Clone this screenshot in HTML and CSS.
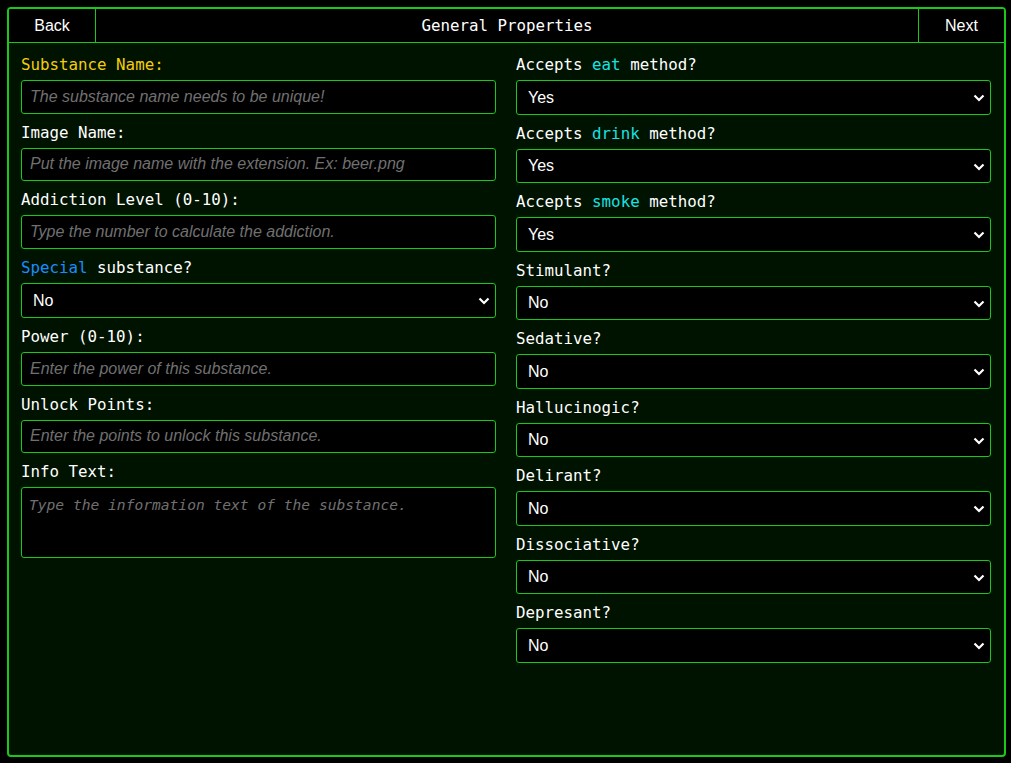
FILE: index.html
```html
<!DOCTYPE html>
<html>
<head>
<meta charset="utf-8">
<link rel="stylesheet" href="styles.css">
</head>
<body>
<div class="panel">
  <div class="topbar">
    <button class="nav nav-back">Back</button>
    <div class="title">General Properties</div>
    <button class="nav nav-next">Next</button>
  </div>
  <div class="content">
    <div class="col">
      <div class="field">
        <label class="lbl"><span class="yellow">Substance Name:</span></label>
        <input class="inp" type="text" placeholder="The substance name needs to be unique!">
      </div>
      <div class="field">
        <label class="lbl">Image Name:</label>
        <input class="inp" type="text" placeholder="Put the image name with the extension. Ex: beer.png">
      </div>
      <div class="field">
        <label class="lbl">Addiction Level (0-10):</label>
        <input class="inp" type="text" placeholder="Type the number to calculate the addiction.">
      </div>
      <div class="field">
        <label class="lbl"><span class="blue">Special</span> substance?</label>
        <div class="sel-wrap sel-tall"><select class="sel"><option>No</option></select><svg class="chev" width="12" height="8" viewBox="0 0 12 8"><path d="M1.5 1.5 L6 6 L10.5 1.5" fill="none" stroke="#fff" stroke-width="2.2"/></svg></div>
      </div>
      <div class="field">
        <label class="lbl">Power (0-10):</label>
        <input class="inp" type="text" placeholder="Enter the power of this substance.">
      </div>
      <div class="field">
        <label class="lbl">Unlock Points:</label>
        <input class="inp" type="text" placeholder="Enter the points to unlock this substance.">
      </div>
      <div class="field">
        <label class="lbl">Info Text:</label>
        <textarea class="area" placeholder="Type the information text of the substance."></textarea>
      </div>
    </div>
    <div class="col">
      <div class="field">
        <label class="lbl">Accepts <span class="cyan">eat</span> method?</label>
        <div class="sel-wrap"><select class="sel"><option>Yes</option></select><svg class="chev" width="12" height="8" viewBox="0 0 12 8"><path d="M1.5 1.5 L6 6 L10.5 1.5" fill="none" stroke="#fff" stroke-width="2.2"/></svg></div>
      </div>
      <div class="field">
        <label class="lbl">Accepts <span class="cyan">drink</span> method?</label>
        <div class="sel-wrap"><select class="sel"><option>Yes</option></select><svg class="chev" width="12" height="8" viewBox="0 0 12 8"><path d="M1.5 1.5 L6 6 L10.5 1.5" fill="none" stroke="#fff" stroke-width="2.2"/></svg></div>
      </div>
      <div class="field">
        <label class="lbl">Accepts <span class="cyan">smoke</span> method?</label>
        <div class="sel-wrap"><select class="sel"><option>Yes</option></select><svg class="chev" width="12" height="8" viewBox="0 0 12 8"><path d="M1.5 1.5 L6 6 L10.5 1.5" fill="none" stroke="#fff" stroke-width="2.2"/></svg></div>
      </div>
      <div class="field">
        <label class="lbl">Stimulant?</label>
        <div class="sel-wrap"><select class="sel"><option>No</option></select><svg class="chev" width="12" height="8" viewBox="0 0 12 8"><path d="M1.5 1.5 L6 6 L10.5 1.5" fill="none" stroke="#fff" stroke-width="2.2"/></svg></div>
      </div>
      <div class="field">
        <label class="lbl">Sedative?</label>
        <div class="sel-wrap"><select class="sel"><option>No</option></select><svg class="chev" width="12" height="8" viewBox="0 0 12 8"><path d="M1.5 1.5 L6 6 L10.5 1.5" fill="none" stroke="#fff" stroke-width="2.2"/></svg></div>
      </div>
      <div class="field">
        <label class="lbl">Hallucinogic?</label>
        <div class="sel-wrap"><select class="sel"><option>No</option></select><svg class="chev" width="12" height="8" viewBox="0 0 12 8"><path d="M1.5 1.5 L6 6 L10.5 1.5" fill="none" stroke="#fff" stroke-width="2.2"/></svg></div>
      </div>
      <div class="field">
        <label class="lbl">Delirant?</label>
        <div class="sel-wrap"><select class="sel"><option>No</option></select><svg class="chev" width="12" height="8" viewBox="0 0 12 8"><path d="M1.5 1.5 L6 6 L10.5 1.5" fill="none" stroke="#fff" stroke-width="2.2"/></svg></div>
      </div>
      <div class="field">
        <label class="lbl">Dissociative?</label>
        <div class="sel-wrap"><select class="sel"><option>No</option></select><svg class="chev" width="12" height="8" viewBox="0 0 12 8"><path d="M1.5 1.5 L6 6 L10.5 1.5" fill="none" stroke="#fff" stroke-width="2.2"/></svg></div>
      </div>
      <div class="field">
        <label class="lbl">Depresant?</label>
        <div class="sel-wrap"><select class="sel"><option>No</option></select><svg class="chev" width="12" height="8" viewBox="0 0 12 8"><path d="M1.5 1.5 L6 6 L10.5 1.5" fill="none" stroke="#fff" stroke-width="2.2"/></svg></div>
      </div>
    </div>
  </div>
</div>
</body>
</html>
```
FILE: styles.css
```css
* { box-sizing: border-box; }
html, body {
  margin: 0;
  padding: 0;
  background: #000;
  height: 100%;
}
body {
  padding: 7px;
  font-family: "DejaVu Sans Mono", "Liberation Mono", monospace;
}
.panel {
  width: 999px;
  height: 750px;
  border: 2px solid #19c819;
  border-radius: 4px;
  background: #001200;
  display: flex;
  flex-direction: column;
}
.topbar {
  display: flex;
  height: 34px;
  background: #000;
  border-bottom: 1px solid #19c819;
  border-radius: 2px 2px 0 0;
}
.nav {
  background: #000;
  color: #fff;
  font-family: "Liberation Sans", Arial, sans-serif;
  font-size: 16px;
  border: none;
  padding: 0;
  margin: 0;
  height: 33px;
}
.nav-back {
  width: 87px;
  border-right: 1px solid #19c819;
  border-top-left-radius: 2px;
}
.nav-next {
  width: 86px;
  border-left: 1px solid #19c819;
  border-top-right-radius: 2px;
}
.title {
  flex: 1;
  text-align: center;
  color: #fff;
  font-size: 15.8px;
  line-height: 33px;
}
.content {
  display: flex;
  gap: 20px;
  padding: 9px 12px 0 12px;
}
.col {
  width: 475px;
  display: flex;
  flex-direction: column;
}
.field {
  display: flex;
  flex-direction: column;
  margin-bottom: 6px;
}
.lbl {
  color: #fff;
  font-size: 15.8px;
  line-height: 26px;
  height: 24px;
  margin-bottom: 4px;
  white-space: pre;
}
.yellow { color: #f5cd0c; }
.blue { color: #1a8cff; }
.cyan { color: #19e3e3; }
.inp {
  height: 33.5px;
  width: 100%;
  background: #000;
  border: 1px solid #19c819;
  border-radius: 3px;
  color: #fff;
  font-family: "Liberation Sans", Arial, sans-serif;
  font-size: 16px;
  padding: 0 8px;
  outline: none;
}
.inp::placeholder {
  color: #707070;
  font-style: italic;
}
.sel-wrap {
  position: relative;
  height: 34.5px;
}
.sel-tall {
  height: 35.5px;
}
.sel {
  appearance: none;
  -webkit-appearance: none;
  width: 100%;
  height: 100%;
  background: #000;
  border: 1px solid #19c819;
  border-radius: 3px;
  color: #fff;
  font-family: "Liberation Sans", Arial, sans-serif;
  font-size: 16px;
  padding: 0 11px;
  outline: none;
}
.chev {
  position: absolute;
  right: 6px;
  top: 14px;
  pointer-events: none;
}
.area {
  height: 71px;
  width: 100%;
  background: #000;
  border: 1px solid #19c819;
  border-radius: 3px;
  color: #fff;
  font-family: "DejaVu Sans Mono", monospace;
  font-size: 14.6px;
  padding: 8px 7px;
  resize: none;
  outline: none;
}
.area::placeholder {
  color: #707070;
  font-style: italic;
}
```
